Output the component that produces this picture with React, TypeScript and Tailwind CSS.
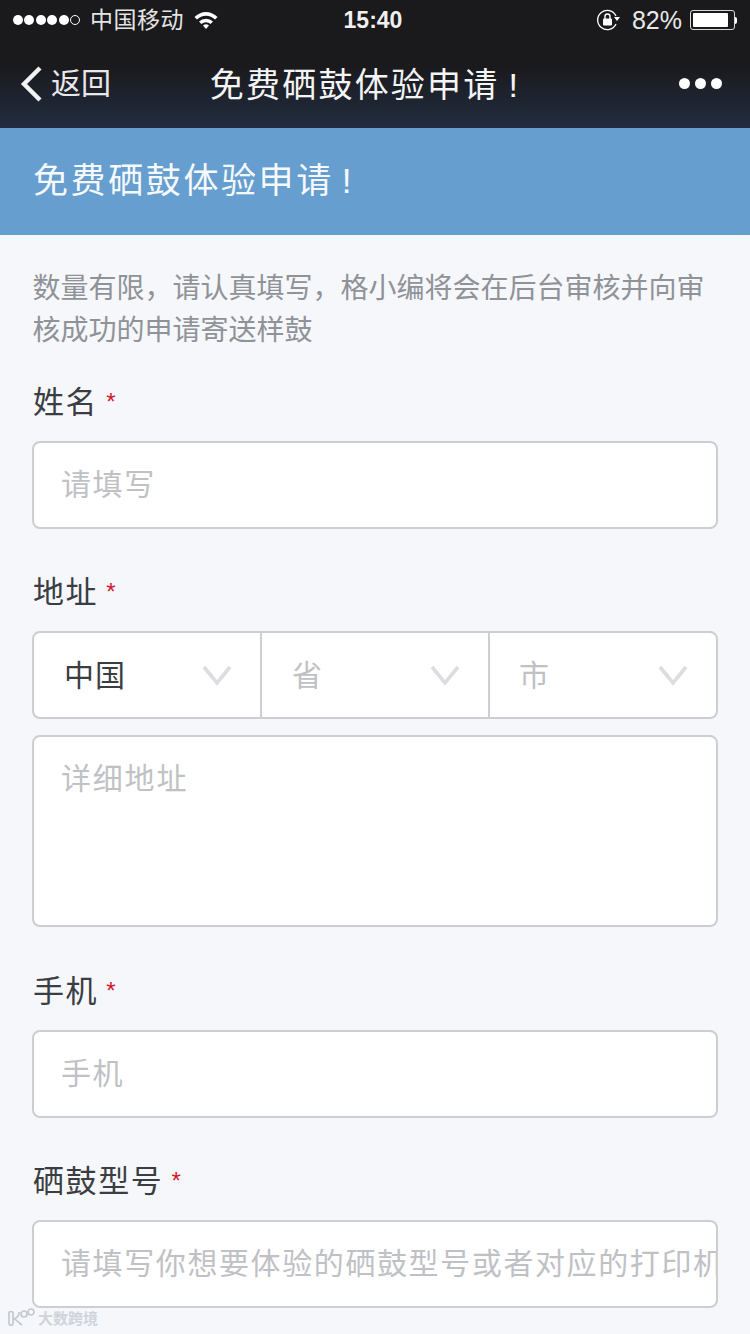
import React from "react";

function Chevron() {
  return (
    <svg width="30" height="22" viewBox="0 0 30 22" fill="none">
      <path d="M2 3 L15 19 L28 3" stroke="#dcdde0" strokeWidth="3.6" />
    </svg>
  );
}

function Label({ text }: { text: string }) {
  return (
    <div className="flex h-[40px] items-center pl-[1px] pt-[4px] text-[31px] tracking-[1.6px] text-[#3a3d42]">
      <span>{text}</span>
      <span className="ml-[8px] mt-[-2px] text-[24px] leading-none text-[#d0182c]">*</span>
    </div>
  );
}

function TextBox({ placeholder }: { placeholder: string }) {
  return (
    <div className="mt-[20px] flex h-[88px] items-center overflow-hidden whitespace-nowrap rounded-[8px] border-2 border-[#cdced1] bg-white pb-[2px] pl-[27px]">
      <span className="text-[30px] tracking-[1.6px] text-[#bfc1c5]">{placeholder}</span>
    </div>
  );
}

function StatusBar() {
  return (
    <div className="flex h-[42px] items-center justify-between pb-[2px] pl-[13px] pr-[13px] text-white">
      <div className="flex w-[288px] items-center">
        <div className="flex gap-[1.4px]">
          <span className="h-[10px] w-[10px] rounded-full bg-white" />
          <span className="h-[10px] w-[10px] rounded-full bg-white" />
          <span className="h-[10px] w-[10px] rounded-full bg-white" />
          <span className="h-[10px] w-[10px] rounded-full bg-white" />
          <span className="h-[10px] w-[10px] rounded-full bg-white" />
          <span className="h-[10px] w-[10px] rounded-full border border-white" />
        </div>
        <span className="ml-[10px] text-[23px] tracking-[0.5px] leading-none text-[#e4e4e4]">中国移动</span>
        <svg width="24" height="18" viewBox="0 0 24 18" className="ml-[10px]">
          <path d="M0.5 6 A16 16 0 0 1 23.5 6 L21 8.6 A12.6 12.6 0 0 0 3 8.6 Z" fill="#fff" />
          <path d="M5 10.5 A10 10 0 0 1 19 10.5 L16.6 13 A7 7 0 0 0 7.4 13 Z" fill="#fff" />
          <path d="M9 14.5 A4.6 4.6 0 0 1 15 14.5 L12 18 Z" fill="#fff" />
        </svg>
      </div>
      <span className="text-[23px] font-bold leading-none text-[#f0f0f0]">15:40</span>
      <div className="flex w-[292px] items-center justify-end">
        <svg width="25" height="22" viewBox="0 0 25 22" fill="none">
          <path d="M20 15 A9.6 9.6 0 1 1 20 7" stroke="#fff" strokeWidth="1.3" />
          <path d="M18 8 L24 8 L21 12 Z" fill="#fff" />
          <rect x="7" y="9.5" width="9" height="7" rx="1" fill="#fff" />
          <path d="M9 10 V7.5 A2.5 2.5 0 0 1 14 7.5 V10" stroke="#fff" strokeWidth="1.4" />
        </svg>
        <span className="ml-[11px] text-[25px] leading-none text-[#e8e8e8]">82%</span>
        <div className="ml-[8px] flex items-center">
          <div className="h-[20px] w-[45px] rounded-[3px] border border-[#d8d8d8] p-[2px]">
            <div className="h-full w-[35px] rounded-[1px] bg-white" />
          </div>
          <span className="h-[7px] w-[2px] rounded-r-full bg-white" />
        </div>
      </div>
    </div>
  );
}

function NavBar() {
  return (
    <div className="relative flex h-[86px] items-center justify-center bg-gradient-to-b from-[#1a191c] from-[25%] to-[#202d40] pr-[20px]">
      <div className="absolute left-[20px] top-[24px] flex items-center">
        <svg width="24" height="36" viewBox="0 0 24 36" fill="none">
          <path d="M20 2 L4 18 L20 34" stroke="#f2f2f2" strokeWidth="4.4" />
        </svg>
        <span className="ml-[7px] text-[30px] leading-none text-[#e8e8ea]">返回</span>
      </div>
      <h1 className="text-[34px] font-normal tracking-[2.2px] leading-none text-[#f4f4f5]">
        免费硒鼓体验申请<span className="ml-[9px]">!</span>
      </h1>
      <div className="absolute right-[28px] top-[36px] flex gap-[5px]">
        <span className="h-[11px] w-[11px] rounded-full bg-white" />
        <span className="h-[11px] w-[11px] rounded-full bg-white" />
        <span className="h-[11px] w-[11px] rounded-full bg-white" />
      </div>
    </div>
  );
}

export default function App() {
  return (
    <div className="relative h-[1334px] w-[750px] overflow-hidden bg-[#f5f7fb] font-['Liberation_Sans','Noto_Sans_CJK_SC',sans-serif]">
      <div className="bg-[#1a191c]">
        <StatusBar />
        <NavBar />
      </div>
      <div className="flex h-[107px] items-center bg-[#659ecf] pb-[2px] pl-[33px]">
        <h2 className="text-[35px] font-normal tracking-[2.6px] leading-none text-[#f6f9fc]">
          免费硒鼓体验申请<span className="ml-[8px]">!</span>
        </h2>
      </div>
      <div className="px-[32px] pt-[33px]">
        <p className="pl-[0.5px] text-[28px] leading-[42px] text-[#8f9297]">
          数量有限，请认真填写，格小编将会在后台审核并向审核成功的申请寄送样鼓
        </p>

        <div className="mt-[29px]">
          <Label text="姓名" />
          <TextBox placeholder="请填写" />
        </div>

        <div className="mt-[42px]">
          <Label text="地址" />
          <div className="mt-[20px] flex h-[88px] rounded-[8px] border-2 border-[#cdced1] bg-white text-[30px]">
            <div className="flex w-[228px] items-center justify-between border-r-2 border-[#cdced1] pl-[30px] pr-[28px] tracking-[1px] text-[#3a3d42]">
              <span>中国</span>
              <Chevron />
            </div>
            <div className="flex w-[228px] items-center justify-between border-r-2 border-[#cdced1] pl-[30px] pr-[28px] text-[#bfc1c5]">
              <span>省</span>
              <Chevron />
            </div>
            <div className="flex flex-1 items-center justify-between pl-[29px] pr-[28px] text-[#bfc1c5]">
              <span>市</span>
              <Chevron />
            </div>
          </div>
          <div className="mt-[16px] h-[192px] rounded-[8px] border-2 border-[#cdced1] bg-white pl-[27px] pt-[19px] text-[30px] tracking-[1.8px] text-[#bfc1c5]">
            详细地址
          </div>
        </div>

        <div className="mt-[43px]">
          <Label text="手机" />
          <TextBox placeholder="手机" />
        </div>

        <div className="mt-[42px]">
          <Label text="硒鼓型号" />
          <TextBox placeholder="请填写你想要体验的硒鼓型号或者对应的打印机型号" />
        </div>
      </div>

      <div className="absolute bottom-[6px] left-[7px] flex items-center">
        <svg width="28" height="20" viewBox="0 0 28 20" fill="none" stroke="#c4c8cf" strokeWidth="1.7">
          <path d="M2 5 C2 3 6 3 6 5 V15 C6 18 2 18 2 15 Z" />
          <path d="M7 11 C10 10 12 7 12 4 M7 11 C10 12 12 15 15 17" />
          <circle cx="17" cy="6" r="3" />
          <circle cx="24" cy="4" r="3" />
        </svg>
        <span className="ml-[3px] text-[15px] font-bold leading-none text-[#d0d4da]">大数跨境</span>
      </div>
    </div>
  );
}
